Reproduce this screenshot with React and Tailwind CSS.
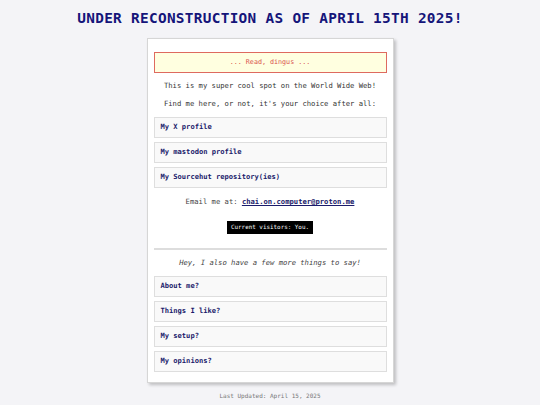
export default function App() {
  const mono = { fontFamily: '"DejaVu Sans Mono", "Liberation Mono", monospace' }
  const top = ['My X profile', 'My mastodon profile', 'My Sourcehut repository(ies)']
  const more = ['About me?', 'Things I like?', 'My setup?', 'My opinions?']

  const Box = ({ label }) => (
    <div className="h-[21px] border border-[#dedede] bg-[#f9f9f9] pl-[6px] flex items-center text-[7.1px] font-bold text-[#1b1b6b]">
      {label}
    </div>
  )

  return (
    <div className="w-[540px] h-[405px] bg-[#f4f4f7] overflow-hidden" style={mono}>
      <h1 className="pt-[10px] leading-[17px] text-center text-[14.4px] font-bold tracking-[0.3px] text-[#15157a]">
        UNDER RECONSTRUCTION AS OF APRIL 15TH 2025!
      </h1>

      {/* Card */}
      <div className="mt-[11px] mx-auto w-[247px] bg-white border border-[#d6d6d6] shadow-[2px_2px_3px_rgba(0,0,0,0.22)] px-[6px] pt-[13px] pb-[10px]">
        <div className="h-[21px] border border-[#de6a5f] bg-[#ffffe0] flex items-center justify-center text-[6.7px] text-[#d9534f]">
          ... Read, dingus ...
        </div>

        <p className="mt-[4px] leading-[18px] text-center text-[7.2px] text-[#333]">
          This is my super cool spot on the World Wide Web!
        </p>
        <p className="leading-[18px] text-center text-[7.2px] text-[#333]">
          Find me here, or not, it's your choice after all:
        </p>

        <div className="mt-[4px] flex flex-col gap-[4px]">
          {top.map(l => <Box key={l} label={l} />)}
        </div>

        <p className="mt-[5px] leading-[18px] text-center text-[7.2px] text-[#444]">
          Email me at: <span className="font-bold text-[#1b1b6b] underline">chai.on.computer@proton.me</span>
        </p>

        <div className="mt-[10px] flex justify-center">
          <span className="h-[13px] px-[4px] bg-black text-white text-[5.9px] flex items-center">
            Current visitors: You.
          </span>
        </div>

        <div className="mt-[14px] h-[2px] bg-[#dddddd]" />

        <p className="mt-[4px] leading-[18px] text-center text-[7.2px] italic text-[#444]">
          Hey, I also have a few more things to say!
        </p>

        <div className="mt-[4px] flex flex-col gap-[4px]">
          {more.map(l => <Box key={l} label={l} />)}
        </div>
      </div>

      <p className="mt-[8px] text-center text-[6px] text-[#777]">Last Updated: April 15, 2025</p>
    </div>
  )
}
